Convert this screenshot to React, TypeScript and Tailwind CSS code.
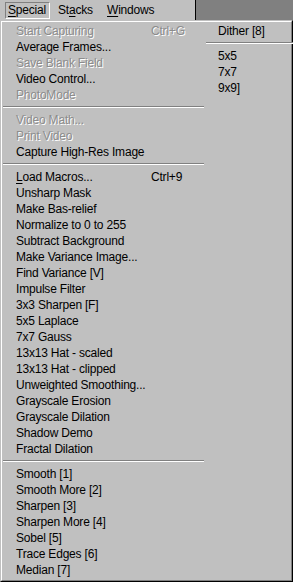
import React from "react";

type Row = { label: React.ReactNode; shortcut?: string; disabled?: boolean } | "sep";

const leftItems: Row[] = [
  { label: "Start Capturing", shortcut: "Ctrl+G", disabled: true },
  { label: "Average Frames..." },
  { label: "Save Blank Field", disabled: true },
  { label: "Video Control..." },
  { label: "PhotoMode", disabled: true },
  "sep",
  { label: "Video Math...", disabled: true },
  { label: "Print Video", disabled: true },
  { label: "Capture High-Res Image" },
  "sep",
  {
    label: (
      <>
        <span className="underline underline-offset-2">L</span>oad Macros...
      </>
    ),
    shortcut: "Ctrl+9",
  },
  { label: "Unsharp Mask" },
  { label: "Make Bas-relief" },
  { label: "Normalize to 0 to 255" },
  { label: "Subtract Background" },
  { label: "Make Variance Image..." },
  { label: "Find Variance [V]" },
  { label: "Impulse Filter" },
  { label: "3x3 Sharpen [F]" },
  { label: "5x5 Laplace" },
  { label: "7x7 Gauss" },
  { label: "13x13 Hat - scaled" },
  { label: "13x13 Hat - clipped" },
  { label: "Unweighted Smoothing..." },
  { label: "Grayscale Erosion" },
  { label: "Grayscale Dilation" },
  { label: "Shadow Demo" },
  { label: "Fractal Dilation" },
  "sep",
  { label: "Smooth [1]" },
  { label: "Smooth More [2]" },
  { label: "Sharpen [3]" },
  { label: "Sharpen More [4]" },
  { label: "Sobel [5]" },
  { label: "Trace Edges [6]" },
  { label: "Median [7]" },
];

const rightItems: Row[] = [
  { label: "Dither [8]" },
  "sep",
  { label: "5x5" },
  { label: "7x7" },
  { label: "9x9]" },
];

const disabledCls = "text-[#8c8c8c] [text-shadow:1px_1px_0_#ffffff]";

const MenuRows = ({ items, sepCls }: { items: Row[]; sepCls: string }) => (
  <>
    {items.map((it, i) =>
      it === "sep" ? (
        <div key={i} className={`h-[9px] pt-[3px] ${sepCls}`}>
          <div className="h-px bg-[#808080]" />
          <div className="h-px bg-white" />
        </div>
      ) : (
        <div
          key={i}
          className={`flex h-[16px] items-center pl-[14px] leading-[16px] whitespace-nowrap ${
            it.disabled ? disabledCls : "text-black"
          }`}
        >
          <span className="w-[135px] shrink-0">{it.label}</span>
          {it.shortcut && <span>{it.shortcut}</span>}
        </div>
      )
    )}
  </>
);

export default function App() {
  return (
    <div className="w-[293px] h-[582px] overflow-hidden bg-[#808080] font-['Liberation_Sans',Arial,sans-serif] text-[12px] tracking-[-0.2px]">
      {/* Menu bar */}
      <div className="flex h-[20px]">
        <div className="flex w-[195px] bg-[#c0c0c0] text-black">
          <div className="ml-[5px] mt-[2px] h-[17px] w-[45px] pl-[2px] leading-[15px] border-t border-l border-t-[#808080] border-l-[#808080] border-b border-r border-b-white border-r-white">
            <span className="underline underline-offset-2">S</span>pecial
          </div>
          <div className="ml-[8px] mt-[3px] w-[49px] leading-[15px]">
            St<span className="underline underline-offset-2">a</span>cks
          </div>
          <div className="mt-[3px] leading-[15px]">
            <span className="underline underline-offset-2">W</span>indows
          </div>
        </div>
        <div className="w-px bg-black" />
        <div className="flex-1 bg-[#808080]" />
      </div>

      {/* Dropdown */}
      <div className="h-[562px] border border-t-[#c0c0c0] border-l-[#c0c0c0] border-r-black border-b-black">
        <div className="flex h-full bg-[#c0c0c0] border border-t-white border-l-white border-r-[#808080] border-b-[#808080] py-[1px]">
          <div className="w-[202px] shrink-0">
            <MenuRows items={leftItems} sepCls="ml-[1px]" />
          </div>
          <div className="w-px bg-[#808080]" />
          <div className="w-px bg-white" />
          <div className="flex-1">
            <MenuRows items={rightItems} sepCls="mx-[2px]" />
          </div>
        </div>
      </div>
    </div>
  );
}
